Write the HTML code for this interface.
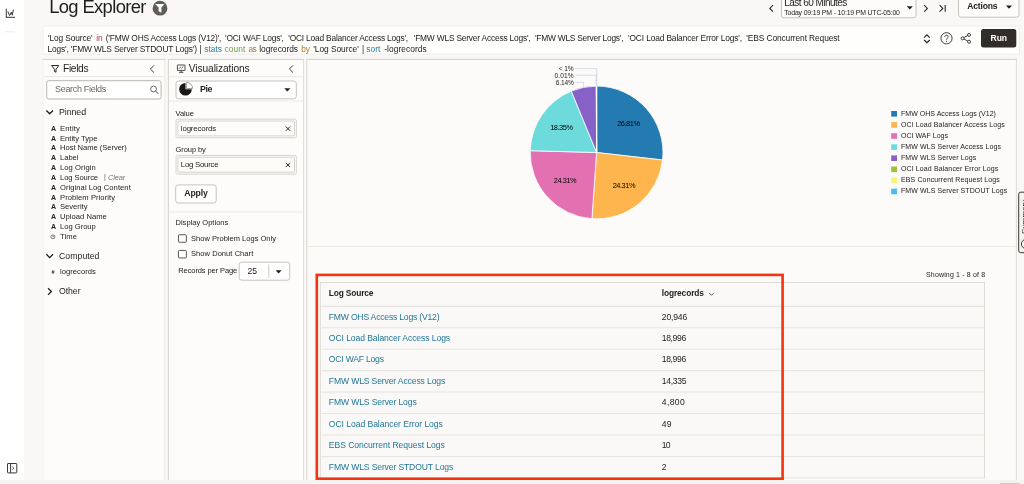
<!DOCTYPE html><html lang="en"><head><meta charset="utf-8"><title>Log Explorer</title><style>

html,body{margin:0;padding:0}
body{width:1024px;height:484px;position:relative;overflow:hidden;background:#f9f8f6;font-family:"Liberation Sans", sans-serif;}
.a{position:absolute;box-sizing:border-box}
.tl{position:absolute;left:0;top:0;width:1024px;height:484px;will-change:transform}
.t{position:absolute;white-space:pre;line-height:normal}
svg{position:absolute;overflow:visible}

</style></head><body>
<svg style="left:0;top:0" width="1024" height="484" viewBox="0 0 1024 484">
<rect x="0" y="0" width="24" height="484" rx="0" fill="#ffffff"/>
<g stroke="#2b2926" stroke-width="0.95" fill="none"><path d="M6.3 8.7 V17.4 M5.8 17.3 H15"/><path d="M7.9 11.4 L9.6 15.6 L11.3 12.2 L12.3 15.2 L13.4 9.6" stroke-linejoin="round"/></g>
<rect x="5.2" y="31.3" width="9.8" height="1" rx="0" fill="#eeecea"/>
<g stroke="#3a3633" stroke-width="1" fill="none"><rect x="7.5" y="463.5" width="9.3" height="9.4" rx="0.6"/><path d="M10.6 463.5 V472.9"/><path d="M12.3 466.8 L13.9 468.3 L12.3 469.8" stroke-width="0.9"/></g>
<g><circle cx="160" cy="8.2" r="7.4" fill="#625c57"/><path d="M155 3.9 H164.4 L161.4 7.6 V12.7 L158.6 11.2 V7.6 Z" fill="#ffffff"/></g>
<g transform="translate(768 4)"><path d="M5 1.2 L1.8 4.4 L5 7.6" stroke="#2b2926" stroke-width="1.1" fill="none"/></g>
<rect x="781.5" y="-5.5" width="134.5" height="23.3" rx="2.5" fill="#fdfcfb" stroke="#c6c2bc" stroke-width="1.0"/>
<g transform="translate(906.5 6)"><path d="M0.3 0.2 H6.3 L3.3 3.4 Z" fill="#1f1d1b"/></g>
<g transform="translate(922 4)"><path d="M2.2 1.2 L5.4 4.4 L2.2 7.6" stroke="#2b2926" stroke-width="1.1" fill="none"/></g>
<g transform="translate(938 4)"><path d="M1.6 1.2 L4.8 4.4 L1.6 7.6 M7.2 1 V7.8" stroke="#2b2926" stroke-width="1.1" fill="none"/></g>
<rect x="958.5" y="-5.5" width="60.5" height="22.7" rx="2.5" fill="#fdfcfb" stroke="#c6c2bc" stroke-width="1.0"/>
<g transform="translate(1005.7 5.4)"><path d="M0.3 0.2 H6.3 L3.3 3.4 Z" fill="#1f1d1b"/></g>
<rect x="43.2" y="26.0" width="976.3" height="28.2" rx="0" fill="#fefefd" stroke="#f0eeeb" stroke-width="1.0"/>
<path d="M924.1 37.6 L926.9 34.9 L929.7 37.6 M924.1 40 L926.9 42.7 L929.7 40" stroke="#2b2926" stroke-width="1.25" fill="none"/>
<g transform="translate(939.5 31.5)"><circle cx="7" cy="6.8" r="5.6" stroke="#2b2926" stroke-width="0.9" fill="none"/><path d="M5.3 5.4 C5.3 3.2 8.7 3.2 8.7 5.3 C8.7 6.6 7 6.6 7 8.1" stroke="#2b2926" stroke-width="0.9" fill="none"/><circle cx="7" cy="9.8" r="0.6" fill="#2b2926"/></g>
<g transform="translate(960 32.5)"><g stroke="#2b2926" stroke-width="0.9" fill="none"><circle cx="2.6" cy="5.8" r="1.5"/><circle cx="9" cy="2.4" r="1.5"/><circle cx="9" cy="9.2" r="1.5"/><path d="M3.9 5.1 L7.7 3.1 M3.9 6.5 L7.7 8.5"/></g></g>
<rect x="981" y="29" width="35.3" height="18.6" rx="2.5" fill="#312d2a"/>
<rect x="42.7" y="59" width="122.7" height="430" rx="0" fill="#fdfcfb"/>
<rect x="42.7" y="58.9" width="122.7" height="1" rx="0" fill="#d3cfca"/>
<rect x="164.4" y="59.9" width="1" height="430" rx="0" fill="#ebe8e5"/>
<rect x="42.7" y="59.9" width="0.8" height="430" rx="0" fill="#f1efed"/>
<rect x="42.7" y="76.1" width="121.7" height="1" rx="0" fill="#ebe8e5"/>
<path d="M51.6 65.5 H58.8 L56 69.3 V72.2 L54.4 71.4 V69.3 Z" stroke="#2b2926" stroke-width="1" fill="none" stroke-linejoin="round"/>
<g transform="translate(148 64)"><path d="M6 1.4 L2.4 5 L6 8.6" stroke="#2b2926" stroke-width="0.9" fill="none"/></g>
<rect x="46.7" y="80.7" width="114.4" height="18.3" rx="2.2" fill="#ffffff" stroke="#b9b4ae" stroke-width="1.0"/>
<g transform="translate(149.5 85)"><circle cx="4" cy="4" r="2.9" stroke="#4a4642" stroke-width="0.8" fill="none"/><path d="M6.2 6.2 L9 9" stroke="#4a4642" stroke-width="0.9"/></g>
<g transform="translate(46.1 109.7)"><path d="M0.3 0.8 L3.6 4.1 L6.9 0.8" stroke="#1f1d1b" stroke-width="1.3" fill="none"/></g>
<g transform="translate(50.4 234.33)"><circle cx="2.5" cy="2.5" r="2" stroke="#2b2926" stroke-width="0.6" fill="none"/><path d="M2.5 1.3 V2.6 H3.4" stroke="#2b2926" stroke-width="0.5" fill="none"/></g>
<g transform="translate(46.1 253.5)"><path d="M0.3 0.8 L3.6 4.1 L6.9 0.8" stroke="#1f1d1b" stroke-width="1.3" fill="none"/></g>
<g transform="translate(47 287.7)"><path d="M1 0.4 L4.4 3.8 L1 7.2" stroke="#1f1d1b" stroke-width="1.3" fill="none"/></g>
<rect x="167.9" y="59" width="136" height="430" rx="0" fill="#fdfcfb"/>
<rect x="167.9" y="58.9" width="136" height="1" rx="0" fill="#d3cfca"/>
<rect x="167.9" y="59.9" width="1" height="430" rx="0" fill="#d6d2ce"/>
<rect x="303" y="59.9" width="1" height="430" rx="0" fill="#e2dfdb"/>
<rect x="168.9" y="76.2" width="134.1" height="1" rx="0" fill="#ebe8e5"/>
<g stroke="#3a3633" fill="none"><rect x="177.4" y="65" width="7.6" height="5.4" rx="0.3" stroke-width="0.9"/><path d="M181.2 70.4 V72.2 M179 72.3 H183.4" stroke-width="0.9"/><path d="M179 68.7 L180.4 67.1 L181.6 68.1 L183.4 66.4" stroke-width="0.7"/></g>
<g transform="translate(287 64)"><path d="M6 1.4 L2.4 5 L6 8.6" stroke="#2b2926" stroke-width="0.9" fill="none"/></g>
<rect x="176.0" y="81.0" width="120.3" height="17.8" rx="2.5" fill="#ffffff" stroke="#c6c2bc" stroke-width="1.0"/>
<g><path d="M185.5 83 A6.3 6.3 0 1 0 191.8 89.3 H185.5 Z" fill="#1a1816"/><path d="M186.4 82.3 A6.2 6.2 0 0 1 192.6 88.5 H186.4 Z" fill="#ffffff" stroke="#8a8682" stroke-width="0.8"/></g>
<g transform="translate(284 88)"><path d="M0.3 0.2 H6.3 L3.3 3.4 Z" fill="#1f1d1b"/></g>
<rect x="168.9" y="100.6" width="134.1" height="1" rx="0" fill="#ebe8e5"/>
<rect x="176.0" y="119.2" width="120.3" height="18.6" rx="1.5" fill="#fefefd" stroke="#d6d2cd" stroke-width="1.0"/>
<rect x="177.9" y="121.0" width="116.6" height="14.9" rx="1" fill="#fdfcfb" stroke="#d6d2cd" stroke-width="1.0"/>
<g transform="translate(284.6 125.3)"><path d="M1.2 1.2 L5.5 5.5 M5.5 1.2 L1.2 5.5" stroke="#2b2926" stroke-width="1"/></g>
<rect x="176.0" y="155.5" width="120.3" height="18.6" rx="1.5" fill="#fefefd" stroke="#d6d2cd" stroke-width="1.0"/>
<rect x="177.9" y="157.3" width="116.6" height="14.9" rx="1" fill="#fdfcfb" stroke="#d6d2cd" stroke-width="1.0"/>
<g transform="translate(284.6 161.6)"><path d="M1.2 1.2 L5.5 5.5 M5.5 1.2 L1.2 5.5" stroke="#2b2926" stroke-width="1"/></g>
<rect x="175.7" y="184.9" width="40.5" height="18.1" rx="2.5" fill="#ffffff" stroke="#c6c2bc" stroke-width="1.0"/>
<rect x="168.9" y="211.4" width="134.1" height="1" rx="0" fill="#ebe8e5"/>
<rect x="178.45" y="234.75" width="7.9" height="7.5" rx="0.9" fill="#ffffff" stroke="#47433f" stroke-width="0.9"/>
<rect x="178.45" y="250.45" width="7.9" height="7.5" rx="0.9" fill="#ffffff" stroke="#47433f" stroke-width="0.9"/>
<rect x="239.2" y="262.2" width="50.5" height="18.0" rx="2.5" fill="#ffffff" stroke="#c6c2bc" stroke-width="1.0"/>
<rect x="268.3" y="264.5" width="1" height="13.5" rx="0" fill="#d0ccc7"/>
<g transform="translate(275.3 270)"><path d="M0.3 0.2 H6.3 L3.3 3.4 Z" fill="#1f1d1b"/></g>
<rect x="306.3" y="59" width="710.6" height="430" rx="0" fill="#fcfbfa"/>
<rect x="306.3" y="58.9" width="710.6" height="1" rx="0" fill="#d3cfca"/>
<rect x="306.3" y="59.9" width="1" height="430" rx="0" fill="#d9d5d1"/>
<rect x="1015.9" y="59.9" width="1" height="430" rx="0" fill="#dedbd7"/>
<rect x="307.3" y="246" width="708.6" height="1" rx="0" fill="#ebe8e5"/>
<g><path d="M596.6 152.5 L596.60 86.10 A66.4 66.4 0 0 1 662.57 160.03 Z" fill="#237bb1" stroke="#ffffff" stroke-width="0.8"/><path d="M596.6 152.5 L662.57 160.03 A66.4 66.4 0 0 1 591.93 218.74 Z" fill="#ffb54d" stroke="#ffffff" stroke-width="0.8"/><path d="M596.6 152.5 L591.93 218.74 A66.4 66.4 0 0 1 530.22 150.70 Z" fill="#e371b2" stroke="#ffffff" stroke-width="0.8"/><path d="M596.6 152.5 L530.22 150.70 A66.4 66.4 0 0 1 571.30 91.11 Z" fill="#6ddbdb" stroke="#ffffff" stroke-width="0.8"/><path d="M596.6 152.5 L571.30 91.11 A66.4 66.4 0 0 1 596.27 86.10 Z" fill="#8561c8" stroke="#ffffff" stroke-width="0.8"/><path d="M596.6 152.5 L596.27 86.10 A66.4 66.4 0 0 1 596.54 86.10 Z" fill="#a2bf39" stroke="#ffffff" stroke-width="0.8"/><path d="M596.6 152.5 L596.54 86.10 A66.4 66.4 0 0 1 596.59 86.10 Z" fill="#f7f37b" stroke="#ffffff" stroke-width="0.8"/><path d="M596.6 152.5 L596.59 86.10 A66.4 66.4 0 0 1 596.60 86.10 Z" fill="#47bdef" stroke="#ffffff" stroke-width="0.8"/><g stroke="#c9cfe0" stroke-width="0.7" fill="none"><path d="M575 68.6 H596.8 V86"/><path d="M575 75.2 H596.2 V86"/><path d="M575 82.4 H583.6 V88"/></g></g>
<rect x="891.2" y="111.0" width="5.8" height="5.6" rx="0" fill="#237bb1"/>
<rect x="891.2" y="122.1" width="5.8" height="5.6" rx="0" fill="#ffb54d"/>
<rect x="891.2" y="133.2" width="5.8" height="5.6" rx="0" fill="#e371b2"/>
<rect x="891.2" y="144.29999999999998" width="5.8" height="5.6" rx="0" fill="#6ddbdb"/>
<rect x="891.2" y="155.4" width="5.8" height="5.6" rx="0" fill="#8561c8"/>
<rect x="891.2" y="166.5" width="5.8" height="5.6" rx="0" fill="#a2bf39"/>
<rect x="891.2" y="177.6" width="5.8" height="5.6" rx="0" fill="#f7f37b"/>
<rect x="891.2" y="188.70000000000002" width="5.8" height="5.6" rx="0" fill="#47bdef"/>
<rect x="1018.7" y="192.2" width="11.0" height="60.5" rx="2" fill="#f5f3f0" stroke="#3a3733" stroke-width="1.0"/>
<g transform="translate(1020 238)"><circle cx="6" cy="6" r="4.6" stroke="#2b2926" stroke-width="0.9" fill="none"/></g>
<rect x="319.8" y="282" width="665.2" height="196.8" rx="0" fill="#faf9f8"/>
<rect x="319.8" y="282" width="665.2" height="1" rx="0" fill="#dedad5"/>
<rect x="319.8" y="282" width="1" height="196.8" rx="0" fill="#dedad5"/>
<rect x="984.0" y="282" width="1" height="196.8" rx="0" fill="#dedad5"/>
<rect x="319.8" y="305.75" width="665.2" height="1" rx="0" fill="#e1deda"/>
<rect x="319.8" y="327.21" width="665.2" height="1" rx="0" fill="#e7e4e1"/>
<rect x="319.8" y="348.67" width="665.2" height="1" rx="0" fill="#e7e4e1"/>
<rect x="319.8" y="370.13" width="665.2" height="1" rx="0" fill="#e7e4e1"/>
<rect x="319.8" y="391.59" width="665.2" height="1" rx="0" fill="#e7e4e1"/>
<rect x="319.8" y="413.05" width="665.2" height="1" rx="0" fill="#e7e4e1"/>
<rect x="319.8" y="434.51" width="665.2" height="1" rx="0" fill="#e7e4e1"/>
<rect x="319.8" y="455.97" width="665.2" height="1" rx="0" fill="#e7e4e1"/>
<rect x="319.8" y="477.43" width="665.2" height="1" rx="0" fill="#e7e4e1"/>
<g transform="translate(708.6 292)"><path d="M0.8 1.2 L2.9 3.3 L5 1.2" stroke="#2b2926" stroke-width="0.8" fill="none"/></g>
<rect x="316.8" y="274.9" width="465.8" height="203.8" rx="0" fill="none" stroke="#f5340f" stroke-width="2.6"/>
<rect x="0" y="480.2" width="1024" height="4" rx="0" fill="#f4f3f1"/>
<rect x="1000" y="483.2" width="19.5" height="2" rx="0" fill="#c4c0bb"/>
</svg>
<div class="tl">
<span class="t" style="left:49.2px;top:-4px;font-size:18.4px;color:#1f1d1b;letter-spacing:-0.640px;">Log Explorer</span>
<span class="t" style="left:784.3px;top:-3px;font-size:10px;color:#1f1d1b;letter-spacing:-0.541px;">Last 60 Minutes</span>
<span class="t" style="left:784.3px;top:9px;font-size:6.9px;color:#232120;letter-spacing:-0.158px;">Today 09:19 PM - 10:19 PM UTC-05:00</span>
<span class="t" style="left:967.3px;top:1px;font-size:8.6px;color:#1f1d1b;font-weight:700;letter-spacing:-0.217px;">Actions</span>
<span class="t" style="left:48px;top:33px;font-size:8.4px;color:#232120;letter-spacing:-0.129px;">'Log Source'</span>
<span class="t" style="left:96.25px;top:33px;font-size:8.4px;color:#b3364b;letter-spacing:-0.141px;">in</span>
<span class="t" style="left:105.75px;top:33px;font-size:8.4px;color:#232120;letter-spacing:-0.188px;">('FMW OHS Access Logs (V12)',</span>
<span class="t" style="left:225px;top:33px;font-size:8.4px;color:#232120;letter-spacing:-0.185px;">'OCI WAF Logs',</span>
<span class="t" style="left:288.25px;top:33px;font-size:8.4px;color:#232120;letter-spacing:-0.199px;">'OCI Load Balancer Access Logs',</span>
<span class="t" style="left:413.75px;top:33px;font-size:8.4px;color:#232120;letter-spacing:-0.193px;">'FMW WLS Server Access Logs',</span>
<span class="t" style="left:535px;top:33px;font-size:8.4px;color:#232120;letter-spacing:-0.238px;">'FMW WLS Server Logs',</span>
<span class="t" style="left:628px;top:33px;font-size:8.4px;color:#232120;letter-spacing:-0.135px;">'OCI Load Balancer Error Logs',</span>
<span class="t" style="left:746.25px;top:33px;font-size:8.4px;color:#232120;letter-spacing:-0.100px;">'EBS Concurrent Request</span>
<span class="t" style="left:47.5px;top:44px;font-size:8.4px;color:#232120;letter-spacing:-0.152px;">Logs', 'FMW WLS Server STDOUT Logs')</span>
<span class="t" style="left:199.6px;top:44px;font-size:8.4px;color:#232120;">|</span>
<span class="t" style="left:204.25px;top:44px;font-size:8.4px;color:#2c7ea3;letter-spacing:0.013px;">stats</span>
<span class="t" style="left:224.5px;top:44px;font-size:8.4px;color:#6f9a3f;letter-spacing:0.100px;">count</span>
<span class="t" style="left:248.4px;top:44px;font-size:8.4px;color:#ad7a1e;letter-spacing:-0.630px;">as</span>
<span class="t" style="left:259.25px;top:44px;font-size:8.4px;color:#232120;letter-spacing:-0.036px;">logrecords</span>
<span class="t" style="left:301.25px;top:44px;font-size:8.4px;color:#ad7a1e;letter-spacing:-0.055px;">by</span>
<span class="t" style="left:313.25px;top:44px;font-size:8.4px;color:#232120;letter-spacing:-0.046px;">'Log Source'</span>
<span class="t" style="left:362px;top:44px;font-size:8.4px;color:#232120;">|</span>
<span class="t" style="left:366.25px;top:44px;font-size:8.4px;color:#2c7ea3;letter-spacing:0.070px;">sort</span>
<span class="t" style="left:384.25px;top:44px;font-size:8.4px;color:#232120;letter-spacing:0.054px;">-logrecords</span>
<span class="t" style="left:990.5px;top:33px;font-size:8.6px;color:#ffffff;font-weight:700;letter-spacing:-0.073px;">Run</span>
<span class="t" style="left:63px;top:63px;font-size:10.2px;color:#1f1d1b;letter-spacing:-0.331px;">Fields</span>
<span class="t" style="left:55px;top:84px;font-size:9px;color:#6b6763;letter-spacing:-0.310px;">Search Fields</span>
<span class="t" style="left:59px;top:107px;font-size:8.8px;color:#1f1d1b;letter-spacing:-0.068px;">Pinned</span>
<span class="t" style="left:60px;top:124px;font-size:7.6px;color:#232120;letter-spacing:0.167px;">Entity</span>
<span class="t" style="left:51.1px;top:125px;font-size:7px;color:#232120;font-weight:700;letter-spacing:-0.263px;">A</span>
<span class="t" style="left:60px;top:134px;font-size:7.6px;color:#232120;letter-spacing:0.006px;">Entity Type</span>
<span class="t" style="left:51.1px;top:135px;font-size:7px;color:#232120;font-weight:700;letter-spacing:-0.263px;">A</span>
<span class="t" style="left:60px;top:143px;font-size:7.6px;color:#232120;letter-spacing:-0.040px;">Host Name (Server)</span>
<span class="t" style="left:51.1px;top:144px;font-size:7px;color:#232120;font-weight:700;letter-spacing:-0.263px;">A</span>
<span class="t" style="left:60px;top:153px;font-size:7.6px;color:#232120;letter-spacing:-0.019px;">Label</span>
<span class="t" style="left:51.1px;top:154px;font-size:7px;color:#232120;font-weight:700;letter-spacing:-0.263px;">A</span>
<span class="t" style="left:60px;top:163px;font-size:7.6px;color:#232120;letter-spacing:0.075px;">Log Origin</span>
<span class="t" style="left:51.1px;top:164px;font-size:7px;color:#232120;font-weight:700;letter-spacing:-0.263px;">A</span>
<span class="t" style="left:60px;top:173px;font-size:7.6px;color:#232120;letter-spacing:-0.084px;">Log Source</span>
<span class="t" style="left:51.1px;top:174px;font-size:7px;color:#232120;font-weight:700;letter-spacing:-0.263px;">A</span>
<span class="t" style="left:60px;top:183px;font-size:7.6px;color:#232120;letter-spacing:0.057px;">Original Log Content</span>
<span class="t" style="left:51.1px;top:184px;font-size:7px;color:#232120;font-weight:700;letter-spacing:-0.263px;">A</span>
<span class="t" style="left:60px;top:193px;font-size:7.6px;color:#232120;letter-spacing:0.062px;">Problem Priority</span>
<span class="t" style="left:51.1px;top:194px;font-size:7px;color:#232120;font-weight:700;letter-spacing:-0.263px;">A</span>
<span class="t" style="left:60px;top:202px;font-size:7.6px;color:#232120;letter-spacing:0.008px;">Severity</span>
<span class="t" style="left:51.1px;top:203px;font-size:7px;color:#232120;font-weight:700;letter-spacing:-0.263px;">A</span>
<span class="t" style="left:60px;top:212px;font-size:7.6px;color:#232120;letter-spacing:0.033px;">Upload Name</span>
<span class="t" style="left:51.1px;top:213px;font-size:7px;color:#232120;font-weight:700;letter-spacing:-0.263px;">A</span>
<span class="t" style="left:60px;top:222px;font-size:7.6px;color:#232120;letter-spacing:-0.010px;">Log Group</span>
<span class="t" style="left:51.1px;top:223px;font-size:7px;color:#232120;font-weight:700;letter-spacing:-0.263px;">A</span>
<span class="t" style="left:60px;top:232px;font-size:7.6px;color:#232120;letter-spacing:0.102px;">Time</span>
<span class="t" style="left:104px;top:173px;font-size:7px;color:#5c5853;">|</span>
<span class="t" style="left:108px;top:173px;font-size:7.4px;color:#7a7671;font-style:italic;letter-spacing:-0.134px;">Clear</span>
<span class="t" style="left:59px;top:251px;font-size:8.7px;color:#1f1d1b;letter-spacing:0.051px;">Computed</span>
<span class="t" style="left:51.6px;top:269px;font-size:5.6px;color:#232120;font-weight:700;letter-spacing:-0.125px;">#</span>
<span class="t" style="left:60px;top:267px;font-size:7.6px;color:#232120;letter-spacing:0.033px;">logrecords</span>
<span class="t" style="left:59px;top:286px;font-size:8.7px;color:#1f1d1b;letter-spacing:-0.047px;">Other</span>
<span class="t" style="left:188.8px;top:63px;font-size:10.2px;color:#1f1d1b;letter-spacing:-0.094px;">Visualizations</span>
<span class="t" style="left:200px;top:84px;font-size:8.8px;color:#1f1d1b;font-weight:700;letter-spacing:-0.406px;">Pie</span>
<span class="t" style="left:175.5px;top:109px;font-size:7.5px;color:#232120;letter-spacing:-0.068px;">Value</span>
<span class="t" style="left:180.8px;top:124px;font-size:7.8px;color:#232120;letter-spacing:-0.111px;">logrecords</span>
<span class="t" style="left:175.5px;top:145px;font-size:7.5px;color:#232120;letter-spacing:-0.070px;">Group by</span>
<span class="t" style="left:180.8px;top:160px;font-size:7.8px;color:#232120;letter-spacing:-0.239px;">Log Source</span>
<span class="t" style="left:184.3px;top:188px;font-size:8.7px;color:#1f1d1b;font-weight:700;letter-spacing:-0.168px;">Apply</span>
<span class="t" style="left:175.5px;top:218px;font-size:7.5px;color:#232120;letter-spacing:0.018px;">Display Options</span>
<span class="t" style="left:191px;top:234px;font-size:7.5px;color:#232120;letter-spacing:0.017px;">Show Problem Logs Only</span>
<span class="t" style="left:191px;top:249px;font-size:7.5px;color:#232120;letter-spacing:0.063px;">Show Donut Chart</span>
<span class="t" style="left:178.3px;top:266px;font-size:7.5px;color:#232120;letter-spacing:-0.103px;">Records per Page</span>
<span class="t" style="left:247.5px;top:266px;font-size:8.6px;color:#232120;letter-spacing:-0.031px;">25</span>
<span class="t" style="left:558.8px;top:65px;font-size:6.6px;color:#232120;letter-spacing:-0.105px;">&lt; 1%</span>
<span class="t" style="left:554.6px;top:72px;font-size:6.6px;color:#232120;letter-spacing:0.059px;">0.01%</span>
<span class="t" style="left:555.8px;top:79px;font-size:6.6px;color:#232120;letter-spacing:-0.181px;">6.14%</span>
<span class="t" style="left:617.15px;top:119px;font-size:7.4px;color:#000000;letter-spacing:-0.430px;">26.81%</span>
<span class="t" style="left:612.65px;top:181px;font-size:7.4px;color:#000000;letter-spacing:-0.430px;">24.31%</span>
<span class="t" style="left:553.75px;top:176px;font-size:7.4px;color:#000000;letter-spacing:-0.430px;">24.31%</span>
<span class="t" style="left:550.15px;top:123px;font-size:7.4px;color:#000000;letter-spacing:-0.430px;">18.35%</span>
<span class="t" style="left:901px;top:110px;font-size:7px;color:#232120;letter-spacing:0.034px;">FMW OHS Access Logs (V12)</span>
<span class="t" style="left:901px;top:121px;font-size:7px;color:#232120;letter-spacing:0.104px;">OCI Load Balancer Access Logs</span>
<span class="t" style="left:901px;top:132px;font-size:7px;color:#232120;letter-spacing:0.016px;">OCI WAF Logs</span>
<span class="t" style="left:901px;top:143px;font-size:7px;color:#232120;letter-spacing:0.091px;">FMW WLS Server Access Logs</span>
<span class="t" style="left:901px;top:154px;font-size:7px;color:#232120;letter-spacing:0.094px;">FMW WLS Server Logs</span>
<span class="t" style="left:901px;top:165px;font-size:7px;color:#232120;letter-spacing:0.112px;">OCI Load Balancer Error Logs</span>
<span class="t" style="left:901px;top:176px;font-size:7px;color:#232120;letter-spacing:0.121px;">EBS Concurrent Request Logs</span>
<span class="t" style="left:901px;top:187px;font-size:7px;color:#232120;letter-spacing:0.084px;">FMW WLS Server STDOUT Logs</span>
<span class="t" style="left:1019.6px;top:234px;font-size:8px;color:#232120;transform:rotate(-90deg);transform-origin:0 0;">Summary</span>
<span class="t" style="left:926px;top:271px;font-size:7px;color:#232120;letter-spacing:0.159px;">Showing 1 - 8 of 8</span>
<span class="t" style="left:328.8px;top:288px;font-size:8.4px;color:#1f1d1b;font-weight:700;letter-spacing:-0.158px;">Log Source</span>
<span class="t" style="left:661.8px;top:288px;font-size:8.4px;color:#1f1d1b;font-weight:700;letter-spacing:-0.130px;">logrecords</span>
<span class="t" style="left:328.8px;top:312px;font-size:8.6px;color:#1f7697;letter-spacing:-0.203px;">FMW OHS Access Logs (V12)</span>
<span class="t" style="left:661.8px;top:312px;font-size:8.6px;color:#232120;letter-spacing:-0.166px;">20,946</span>
<span class="t" style="left:328.8px;top:333px;font-size:8.6px;color:#1f7697;letter-spacing:-0.084px;">OCI Load Balancer Access Logs</span>
<span class="t" style="left:661.8px;top:333px;font-size:8.6px;color:#232120;letter-spacing:-0.383px;">18,996</span>
<span class="t" style="left:328.8px;top:354px;font-size:8.6px;color:#1f7697;letter-spacing:-0.206px;">OCI WAF Logs</span>
<span class="t" style="left:661.8px;top:354px;font-size:8.6px;color:#232120;letter-spacing:-0.383px;">18,996</span>
<span class="t" style="left:328.8px;top:376px;font-size:8.6px;color:#1f7697;letter-spacing:-0.138px;">FMW WLS Server Access Logs</span>
<span class="t" style="left:661.8px;top:376px;font-size:8.6px;color:#232120;letter-spacing:-0.333px;">14,335</span>
<span class="t" style="left:328.8px;top:397px;font-size:8.6px;color:#1f7697;letter-spacing:-0.130px;">FMW WLS Server Logs</span>
<span class="t" style="left:661.8px;top:397px;font-size:8.6px;color:#232120;letter-spacing:0.357px;">4,800</span>
<span class="t" style="left:328.8px;top:419px;font-size:8.6px;color:#1f7697;letter-spacing:-0.057px;">OCI Load Balancer Error Logs</span>
<span class="t" style="left:661.8px;top:419px;font-size:8.6px;color:#232120;letter-spacing:0.119px;">49</span>
<span class="t" style="left:328.8px;top:440px;font-size:8.6px;color:#1f7697;letter-spacing:-0.056px;">EBS Concurrent Request Logs</span>
<span class="t" style="left:661.8px;top:440px;font-size:8.6px;color:#232120;letter-spacing:-0.781px;">10</span>
<span class="t" style="left:328.8px;top:462px;font-size:8.6px;color:#1f7697;letter-spacing:-0.135px;">FMW WLS Server STDOUT Logs</span>
<span class="t" style="left:661.8px;top:462px;font-size:8.6px;color:#232120;letter-spacing:-0.481px;">2</span>
</div>
</body></html>
